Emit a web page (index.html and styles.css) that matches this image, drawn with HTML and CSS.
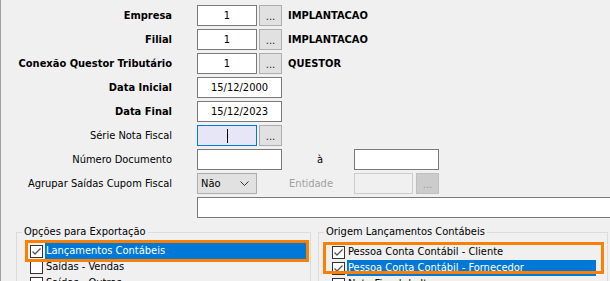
FILE: index.html
```html
<!DOCTYPE html>
<html lang="pt-br">
<head>
    <meta charset="UTF-8">
    <title>Exportação</title>
    <link rel="stylesheet" href="styles.css">
</head>
<body>
    <div class="janela">
        <div class="form">
            <label class="rotulo forte">Empresa</label>
            <div class="campos">
                <span class="caixa curta">1</span>
                <span class="botao">...</span>
                <span class="descricao">IMPLANTACAO</span>
            </div>

            <label class="rotulo forte">Filial</label>
            <div class="campos">
                <span class="caixa curta">1</span>
                <span class="botao">...</span>
                <span class="descricao">IMPLANTACAO</span>
            </div>

            <label class="rotulo forte">Conexão Questor Tributário</label>
            <div class="campos">
                <span class="caixa curta">1</span>
                <span class="botao">...</span>
                <span class="descricao">QUESTOR</span>
            </div>

            <label class="rotulo forte">Data Inicial</label>
            <div class="campos">
                <span class="caixa media">15/12/2000</span>
            </div>

            <label class="rotulo forte">Data Final</label>
            <div class="campos">
                <span class="caixa media">15/12/2023</span>
            </div>

            <label class="rotulo">Série Nota Fiscal</label>
            <div class="campos">
                <span class="caixa curta foco"><span class="cursor"></span></span>
                <span class="botao">...</span>
            </div>

            <label class="rotulo">Número Documento</label>
            <div class="campos">
                <span class="caixa media"></span>
                <span class="ate">à</span>
                <span class="caixa media"></span>
            </div>

            <label class="rotulo">Agrupar Saídas Cupom Fiscal</label>
            <div class="campos">
                <span class="combo">Não
                    <svg width="9" height="6" viewBox="0 0 9 6"><polyline points="0.5,0.5 4.5,4.5 8.5,0.5" fill="none" stroke="#333" stroke-width="1"/></svg>
                </span>
                <span class="entidade">Entidade</span>
                <span class="caixa desativada"></span>
                <span class="botao desativado">...</span>
            </div>

            <span></span>
            <div class="campos">
                <span class="caixa longa"></span>
            </div>
        </div>

        <div class="grupos">
            <fieldset class="grupo esquerdo">
                <legend>Opções para Exportação</legend>
                <span class="moldura"></span>
                <div class="item marcado">
                    <svg class="check" width="13" height="13" viewBox="0 0 13 13"><rect x="0.5" y="0.5" width="12" height="12" fill="#fff" stroke="#333"/><polyline points="2.5,6.5 5,9 10.5,3.5" fill="none" stroke="#555" stroke-width="1.3"/></svg>
                    <span class="texto">Lançamentos Contábeis</span>
                </div>
                <div class="item">
                    <svg class="check" width="13" height="13" viewBox="0 0 13 13"><rect x="0.5" y="0.5" width="12" height="12" fill="#fff" stroke="#333"/></svg>
                    <span class="texto">Saídas - Vendas</span>
                </div>
                <div class="item">
                    <svg class="check" width="13" height="13" viewBox="0 0 13 13"><rect x="0.5" y="0.5" width="12" height="12" fill="#fff" stroke="#333"/></svg>
                    <span class="texto">Saídas - Outras</span>
                </div>
            </fieldset>

            <fieldset class="grupo direito">
                <legend>Origem Lançamentos Contábeis</legend>
                <span class="moldura"></span>
                <div class="item">
                    <svg class="check" width="13" height="13" viewBox="0 0 13 13"><rect x="0.5" y="0.5" width="12" height="12" fill="#fff" stroke="#333"/><polyline points="2.5,6.5 5,9 10.5,3.5" fill="none" stroke="#555" stroke-width="1.3"/></svg>
                    <span class="texto">Pessoa Conta Contábil - Cliente</span>
                </div>
                <div class="item marcado">
                    <svg class="check" width="13" height="13" viewBox="0 0 13 13"><rect x="0.5" y="0.5" width="12" height="12" fill="#fff" stroke="#333"/><polyline points="2.5,6.5 5,9 10.5,3.5" fill="none" stroke="#555" stroke-width="1.3"/></svg>
                    <span class="texto">Pessoa Conta Contábil - Fornecedor</span>
                </div>
                <div class="item">
                    <svg class="check" width="13" height="13" viewBox="0 0 13 13"><rect x="0.5" y="0.5" width="12" height="12" fill="#fff" stroke="#333"/></svg>
                    <span class="texto">Nota Fiscal de Itens</span>
                </div>
            </fieldset>
        </div>
    </div>
</body>
</html>
```

FILE: styles.css
```css
html, body {
    margin: 0;
    height: 100%;
    overflow: hidden;
}

body {
    background-color: #f0f0f0;
    color: #000;
    font-family: "DejaVu Sans Condensed", "DejaVu Sans", sans-serif;
    font-size: 11px;
}

.janela {
    height: 100%;
    border-left: 1px solid #a0a0a0;
}

/* formulario de cima */
.form {
    display: grid;
    grid-template-columns: 171px 1fr;
    grid-auto-rows: 21px;
    column-gap: 25px;
    row-gap: 3px;
    padding-top: 5px;
}

.rotulo {
    text-align: right;
    line-height: 21px;
    white-space: nowrap;
}
.forte { font-weight: bold; }

.campos {
    display: flex;
    align-items: center;
    gap: 2px;
    white-space: nowrap;
}

.caixa {
    box-sizing: border-box;
    height: 21px;
    line-height: 19px;
    border: 1px solid #7a7a7a;
    background: #fff;
    text-align: center;
    flex: none;
}
.curta { width: 60px; }
.media { width: 85px; }
.longa { width: 430px; }

.caixa.foco {
    border-color: #0078d7;
    background: #e6e6f7;
    display: flex;
    justify-content: center;
    align-items: center;
}
.cursor {
    width: 1px;
    height: 14px;
    background: #000;
}

.caixa.desativada {
    width: 59px;
    border-color: #cccccc;
    background: #f0f0f0;
}

.botao {
    box-sizing: border-box;
    width: 23px;
    height: 21px;
    border: 1px solid #adadad;
    background: #e1e1e1;
    text-align: center;
    line-height: 22px;
    color: #1a1a40;
    flex: none;
}
.botao.desativado {
    margin-left: 1px;
    border-color: #bfbfbf;
    background: #cccccc;
    color: #9a9a9a;
}

.descricao {
    margin-left: 4px;
    font-weight: bold;
}

.ate {
    width: 64px;
    padding-left: 4px;
    text-align: center;
}

.combo {
    box-sizing: border-box;
    width: 60px;
    height: 21px;
    border: 1px solid #adadad;
    background: #e1e1e1;
    display: flex;
    align-items: center;
    justify-content: space-between;
    padding: 0 7px 0 3px;
}

.entidade {
    width: 74px;
    padding-right: 19px;
    text-align: right;
    color: #a0a0a0;
}

/* grupos de opcoes */
.grupos {
    display: grid;
    grid-template-columns: 295px 290px;
    column-gap: 7px;
    padding-left: 15px;
    margin-top: 7px;
}

.grupo {
    position: relative;
    margin: 0;
    min-width: 0;
    border: 1px solid #dcdcdc;
    padding: 4px 4px 0 11px;
}
.grupo legend {
    padding: 0 2px;
    margin-left: -6px;
    line-height: 14px;
}
.grupo.direito {
    padding: 5px 11px 0 11px;
}

.item {
    display: flex;
    align-items: center;
    height: 16px;
    white-space: nowrap;
}
.check {
    flex: none;
    margin: 0 2px;
}
.texto {
    flex: 1;
    height: 16px;
    line-height: 16px;
    padding-left: 1px;
}
.marcado .texto {
    background: #0078d7;
    color: #fff;
}

/* marcacao laranja por cima das opcoes */
.moldura {
    position: absolute;
    box-sizing: border-box;
    border: 3px solid #ff8000;
    pointer-events: none;
}
.esquerdo .moldura {
    left: 8px;
    top: 1px;
    width: 284px;
    height: 22px;
}
.direito .moldura {
    left: 4px;
    top: 3px;
    width: 281px;
    height: 32px;
}
```
